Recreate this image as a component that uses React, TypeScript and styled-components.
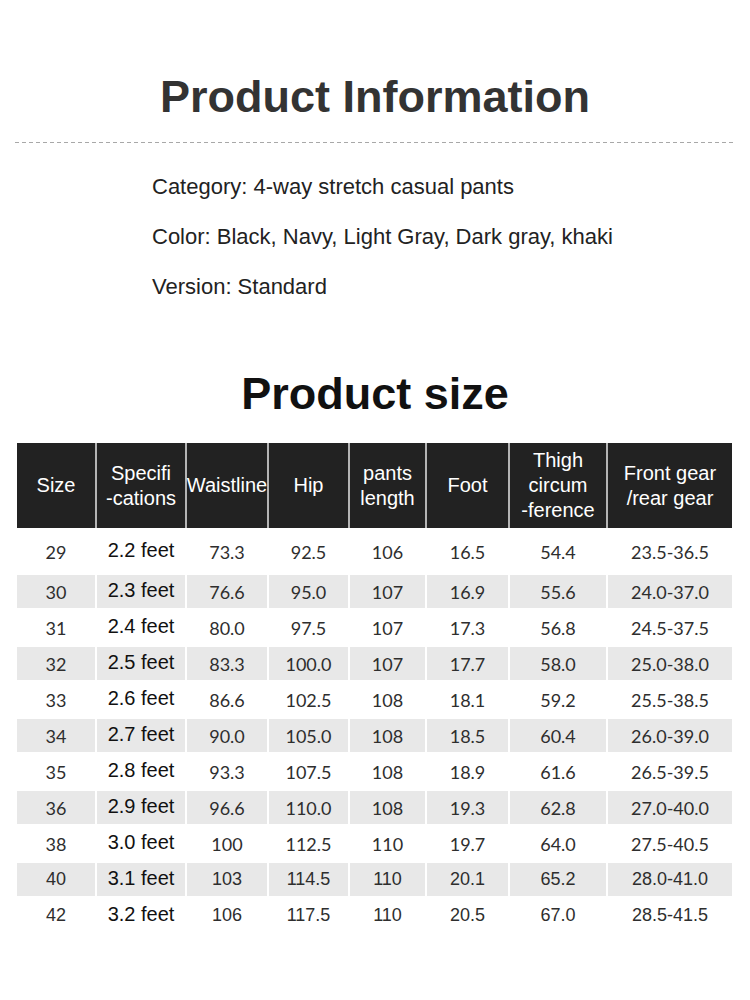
import React from "react";
import styled, { createGlobalStyle } from "styled-components";

const GlobalStyle = createGlobalStyle`
  html, body { margin: 0; padding: 0; background: #ffffff; }
  body { font-family: "Liberation Sans", Arial, sans-serif; }
`;

const Page = styled.div`
  width: 750px;
  min-height: 1000px;
  background: #ffffff;
  padding-top: 74px;
  box-sizing: border-box;
`;

const Title = styled.h1<{ $dark?: boolean }>`
  margin: 0;
  font-family: "Liberation Sans", Arial, sans-serif;
  font-weight: 700;
  font-size: 45px;
  line-height: 45px;
  text-align: center;
  color: ${(p) => (p.$dark ? "#111111" : "#333333")};
`;

const Divider = styled.div`
  margin: 23px 15px 0 15px;
  height: 1px;
  background: repeating-linear-gradient(
    to right,
    #a8a8a8 0 4px,
    transparent 4px 7px
  );
`;

const InfoList = styled.div`
  margin-top: 19px;
  padding-left: 152px;
  display: flex;
  flex-direction: column;
`;

const InfoLine = styled.div`
  font-size: 22px;
  line-height: 50px;
  color: #222222;
`;

const SizeSection = styled.section`
  margin-top: 59px;
`;

const Table = styled.div`
  margin: 27px 0 0 17px;
  width: 715px;
  display: flex;
  flex-direction: column;
  row-gap: 3px;
`;

const cols = "78px 88px 80px 79px 75px 81px 96px 124px";

const HeaderRow = styled.div`
  display: grid;
  grid-template-columns: ${cols};
  column-gap: 2px;
  background: #b4b4b4;
  height: 85px;
`;

const HeadCell = styled.div`
  background: #222222;
  color: #ffffff;
  font-size: 20px;
  line-height: 25px;
  display: flex;
  align-items: center;
  justify-content: center;
  text-align: center;
  white-space: pre-line;
`;

const BodyRow = styled.div<{ $shade: boolean; $first?: boolean }>`
  display: grid;
  grid-template-columns: ${cols};
  column-gap: 2px;
  height: ${(p) => (p.$first ? "41px" : "33px")};
  > div {
    background: ${(p) => (p.$shade ? "#e8e8e8" : "#ffffff")};
  }
`;

const NumCell = styled.div<{ $plain?: boolean }>`
  display: flex;
  align-items: center;
  justify-content: center;
  color: #2e2e2e;
  font-family: ${(p) =>
    p.$plain ? `"Liberation Sans", Arial, sans-serif` : `Lato, "DejaVu Sans", sans-serif`};
  font-size: 18px;
  padding-top: ${(p) => (p.$plain ? "0" : "1px")};
  box-sizing: border-box;
`;

const FeetCell = styled.div`
  display: flex;
  align-items: center;
  justify-content: center;
  color: #111111;
  font-family: "Liberation Sans", Arial, sans-serif;
  font-size: 20px;
  padding-bottom: 3px;
  box-sizing: border-box;
`;

const headers = [
  "Size",
  "Specifi\n-cations",
  "Waistline",
  "Hip",
  "pants\nlength",
  "Foot",
  "Thigh\ncircum\n-ference",
  "Front gear\n/rear gear",
];

const rows: string[][] = [
  ["29", "2.2 feet", "73.3", "92.5", "106", "16.5", "54.4", "23.5-36.5"],
  ["30", "2.3 feet", "76.6", "95.0", "107", "16.9", "55.6", "24.0-37.0"],
  ["31", "2.4 feet", "80.0", "97.5", "107", "17.3", "56.8", "24.5-37.5"],
  ["32", "2.5 feet", "83.3", "100.0", "107", "17.7", "58.0", "25.0-38.0"],
  ["33", "2.6 feet", "86.6", "102.5", "108", "18.1", "59.2", "25.5-38.5"],
  ["34", "2.7 feet", "90.0", "105.0", "108", "18.5", "60.4", "26.0-39.0"],
  ["35", "2.8 feet", "93.3", "107.5", "108", "18.9", "61.6", "26.5-39.5"],
  ["36", "2.9 feet", "96.6", "110.0", "108", "19.3", "62.8", "27.0-40.0"],
  ["38", "3.0 feet", "100", "112.5", "110", "19.7", "64.0", "27.5-40.5"],
  ["40", "3.1 feet", "103", "114.5", "110", "20.1", "65.2", "28.0-41.0"],
  ["42", "3.2 feet", "106", "117.5", "110", "20.5", "67.0", "28.5-41.5"],
];

export default function App() {
  return (
    <>
      <GlobalStyle />
      <Page>
        <Title>Product Information</Title>
        <Divider />
        <InfoList>
          <InfoLine>Category: 4-way stretch casual pants</InfoLine>
          <InfoLine>Color: Black, Navy, Light Gray, Dark gray, khaki</InfoLine>
          <InfoLine>Version: Standard</InfoLine>
        </InfoList>
        <SizeSection>
          <Title $dark>Product size</Title>
          <Table>
            <HeaderRow>
              {headers.map((h) => (
                <HeadCell key={h}>{h}</HeadCell>
              ))}
            </HeaderRow>
            {rows.map((r, i) => {
              const plain = i >= 9;
              return (
                <BodyRow key={r[0]} $shade={i % 2 === 1} $first={i === 0}>
                  {r.map((v, j) =>
                    j === 1 ? (
                      <FeetCell key={j}>{v}</FeetCell>
                    ) : (
                      <NumCell key={j} $plain={plain}>
                        {v}
                      </NumCell>
                    )
                  )}
                </BodyRow>
              );
            })}
          </Table>
        </SizeSection>
      </Page>
    </>
  );
}
